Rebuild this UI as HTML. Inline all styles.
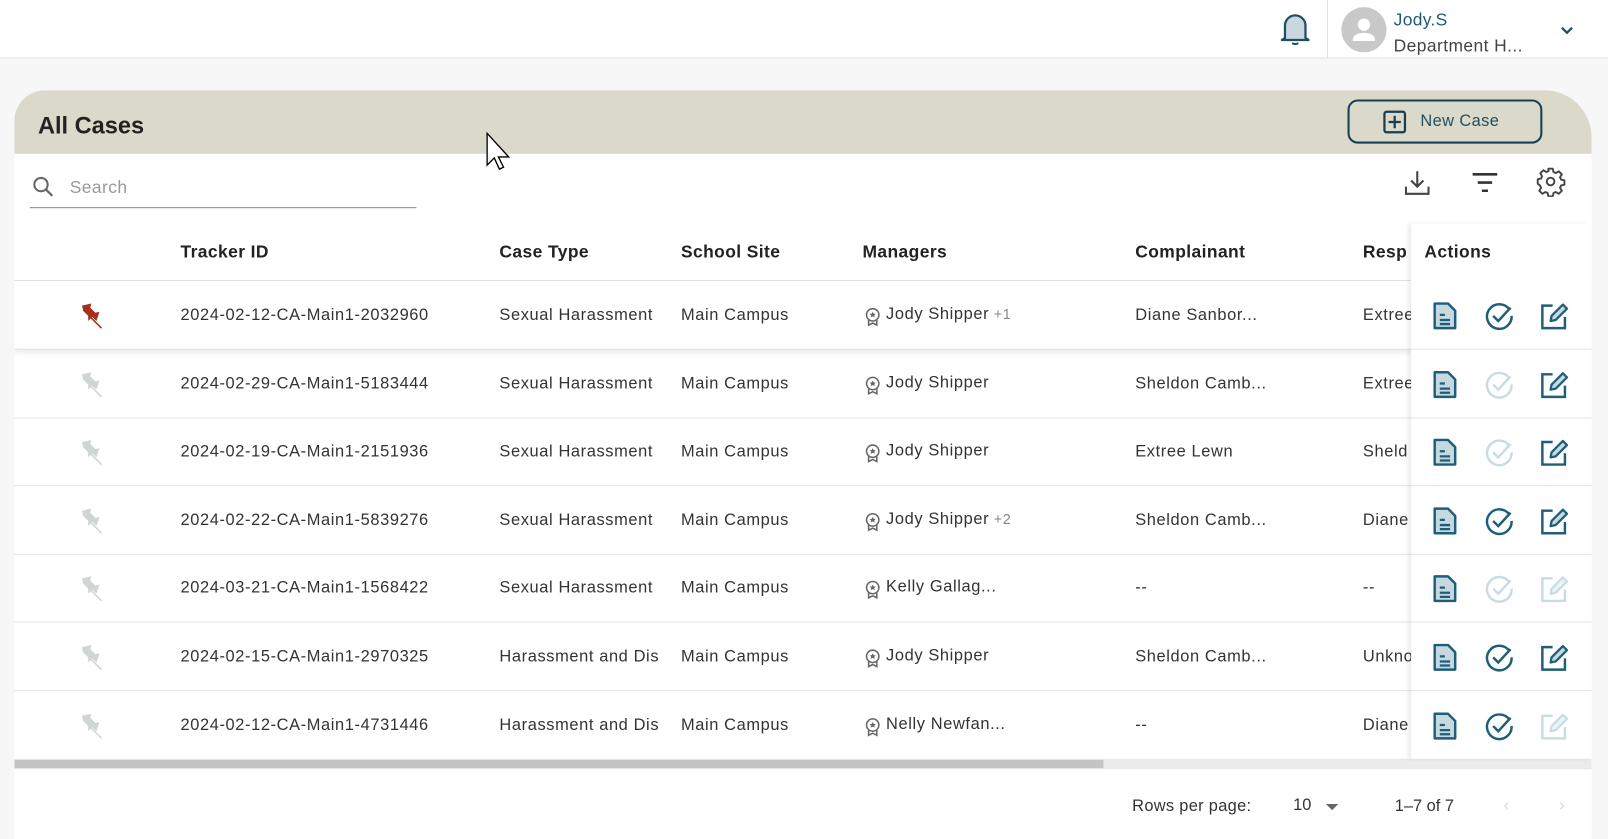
<!DOCTYPE html>
<html><head><meta charset="utf-8"><style>
*{box-sizing:border-box;margin:0;padding:0}
body{width:1608px;height:824px;background:#f7f7f7;font-family:"Liberation Sans",sans-serif;color:#333;position:relative;overflow:hidden}
#wrap{position:absolute;left:0;top:0;width:1568px;height:804px;transform:scale(1.02551);transform-origin:0 0}
.top{position:absolute;left:0;top:0;width:1568px;height:57px;background:#fff;border-bottom:1px solid #e2e2e2}
.abs{position:absolute}
.card{position:absolute;left:14px;top:88px;width:1538px;height:730px;background:#fff;border-radius:30px 46px 0 0;overflow:hidden}
.hdr{position:absolute;left:0;top:0;width:100%;height:62px;background:#dbd9ca}
.t{position:absolute;font-size:16px;letter-spacing:.6px;color:#333;white-space:nowrap}
.h{position:absolute;font-size:17px;font-weight:bold;letter-spacing:.4px;color:#222;white-space:nowrap}
.row{position:absolute;left:0;width:1538px;border-bottom:1px solid #e4e4e4}
.act{position:absolute;left:1362px;top:130px;width:176px;height:522px;background:#fff;box-shadow:-3px 0 4px rgba(0,0,0,.08)}
.g{color:#888}
</style></head><body>
<div id="wrap">
<div class="top">
 <svg class="abs" style="left:1246px;top:10px" width="34" height="36" viewBox="0 0 34 36"><path d="M7 27V15a10 10 0 0 1 20 0v12l3 2H4z" fill="#c9d7de" stroke="#1f4f63" stroke-width="2.2" stroke-linejoin="round"/><path d="M14 32q3 2 6 0" stroke="#1f4f63" stroke-width="2" fill="none"/></svg>
 <div class="abs" style="left:1294px;top:0;width:1px;height:57px;background:#e2e2e2"></div>
 <svg class="abs" style="left:1308px;top:7px" width="44" height="44" viewBox="0 0 44 44"><circle cx="22" cy="22" r="22" fill="#c8c8c8"/><circle cx="22" cy="17" r="6" fill="#fff"/><path d="M11 33q0-8 11-8t11 8z" fill="#fff"/></svg>
 <div class="abs" style="left:1359px;top:10px;font-size:17px;color:#1f5a72;letter-spacing:.3px">Jody.S</div>
 <div class="abs" style="left:1359px;top:35px;font-size:17px;color:#444;letter-spacing:.4px">Department H...</div>
 <svg class="abs" style="left:1520px;top:24px" width="16" height="12" viewBox="0 0 16 12"><path d="M3 3l5 5 5-5" stroke="#1f4f63" stroke-width="2.2" fill="none"/></svg>
</div>
<div class="card">
 <div class="hdr"></div>
 <div class="abs" style="left:23px;top:21px;font-size:23px;font-weight:bold;color:#222">All Cases</div>
 <div class="abs" style="left:1300px;top:9px;width:190px;height:43px;border:2.5px solid #173f52;border-radius:10px"></div>
 <svg class="abs" style="left:1334px;top:19px" width="24" height="24" viewBox="0 0 24 24"><rect x="2" y="2" width="20" height="20" rx="2" fill="none" stroke="#173f52" stroke-width="2.2"/><path d="M12 6v12M6 12h12" stroke="#173f52" stroke-width="2.2"/></svg>
 <div class="abs" style="left:1371px;top:22px;font-size:16px;color:#1f4f63;letter-spacing:.4px">New Case</div>
 <svg class="abs" style="left:16px;top:82px" width="24" height="24" viewBox="0 0 24 24"><circle cx="10" cy="10" r="6.5" fill="none" stroke="#666" stroke-width="2"/><path d="M15 15l6 6" stroke="#666" stroke-width="2.2"/></svg>
 <div class="abs" style="left:54px;top:85px;font-size:17px;color:#999;letter-spacing:.4px">Search</div>
 <div class="abs" style="left:15px;top:114px;width:377px;height:1px;background:#888"></div>
 <svg class="abs" style="left:1354px;top:76px" width="28" height="28" viewBox="0 0 28 28"><path d="M14 3v15M8 12l6 6 6-6M3 18v7h22v-7" stroke="#444" stroke-width="2" fill="none"/></svg>
 <svg class="abs" style="left:1420px;top:78px" width="28" height="24" viewBox="0 0 28 24"><path d="M2 4h24M7 12h14M11 20h6" stroke="#333" stroke-width="2.5"/></svg>
 <svg class="abs" style="left:1483px;top:74px" width="30" height="30" viewBox="0 0 24 24"><path d="M10.3 2h3.4l.6 2.6 1.8.8 2.3-1.4 2.4 2.4-1.4 2.3.8 1.8 2.6.6v3.4l-2.6.6-.8 1.8 1.4 2.3-2.4 2.4-2.3-1.4-1.8.8-.6 2.6h-3.4l-.6-2.6-1.8-.8-2.3 1.4-2.4-2.4 1.4-2.3-.8-1.8L2 13.7v-3.4l2.6-.6.8-1.8L4 5.6 6.4 3.2l2.3 1.4 1.8-.8z" fill="none" stroke="#444" stroke-width="1.5" stroke-linejoin="round"/><circle cx="12" cy="12" r="3" fill="none" stroke="#444" stroke-width="1.5"/></svg>

 <div class="row" style="top:130px;height:56px"></div>
 <div class="h" style="left:162px;top:148px">Tracker ID</div>
 <div class="h" style="left:473px;top:148px">Case Type</div>
 <div class="h" style="left:650px;top:148px">School Site</div>
 <div class="h" style="left:827px;top:148px">Managers</div>
 <div class="h" style="left:1093px;top:148px">Complainant</div>
 <div class="h" style="left:1315px;top:148px">Resp</div>
 <div id="rows"></div>
 <div class="abs" style="left:0;top:653px;width:1538px;height:8px;background:#ececec"></div>
 <div class="abs" style="left:0;top:653px;width:1062px;height:8px;background:#c4c4c4"></div>
 <div class="act" id="act"></div>
 <div class="h" style="left:1375px;top:148px">Actions</div>
 <div class="abs" style="left:0;top:661px;width:1538px;height:1px;background:#e4e4e4"></div>
 <div class="abs" style="left:1090px;top:690px;font-size:16px;color:#333;letter-spacing:.3px">Rows per page:</div>
 <div class="abs" style="left:1247px;top:689px;font-size:16px;color:#333">10</div>
 <svg class="abs" style="left:1278px;top:695px" width="14" height="8"><path d="M1 1h12L7 7z" fill="#666"/></svg>
 <div class="abs" style="left:1346px;top:690px;font-size:16px;color:#333">1–7 of 7</div>
 <div class="abs" style="left:1452px;top:687px;font-size:18px;color:#ddd">&lsaquo;</div>
 <div class="abs" style="left:1506px;top:687px;font-size:18px;color:#ddd">&rsaquo;</div>
</div>
<svg class="abs" style="left:474px;top:129px" width="26" height="40" viewBox="0 0 26 40"><path d="M1 1v31l7-7 5 11 4-2-5-10h10z" fill="#fff" stroke="#000" stroke-width="1.3"/></svg>
</div>
<script>
var d=[
["2024-02-12-CA-Main1-2032960","Sexual Harassment","Jody Shipper"," +1","Diane Sanbor...","Extree",1,1,1],
["2024-02-29-CA-Main1-5183444","Sexual Harassment","Jody Shipper","","Sheldon Camb...","Extree",0,0,1],
["2024-02-19-CA-Main1-2151936","Sexual Harassment","Jody Shipper","","Extree Lewn","Sheld",0,0,1],
["2024-02-22-CA-Main1-5839276","Sexual Harassment","Jody Shipper"," +2","Sheldon Camb...","Diane",0,1,1],
["2024-03-21-CA-Main1-1568422","Sexual Harassment","Kelly Gallag...","","--","--",0,0,0],
["2024-02-15-CA-Main1-2970325","Harassment and Dis","Jody Shipper","","Sheldon Camb...","Unkno",0,1,1],
["2024-02-12-CA-Main1-4731446","Harassment and Dis","Nelly Newfan...","","--","Diane",0,1,0]];
var h='',a='';
d.forEach(function(r,i){
 var y=186+i*66.6, ty=y+25;
 h+='<div class="row" style="top:'+y+'px;height:67px;'+(i==0?'box-shadow:0 3px 5px rgba(0,0,0,.08);':'')+'"></div>';
 var pc=r[6]?'#a5301f':'#cfd4d6';
 h+='<svg class="abs" style="left:60px;top:'+(y+19)+'px" width="30" height="30" viewBox="0 0 30 30"><path d="M6 5l9-2 -1 4 5 5 4-1-3 9-4-4-4 4 0-5-5-5z" fill="'+pc+'"/><path d="M15 17l10 10" stroke="'+pc+'" stroke-width="1.5"/></svg>';
 h+='<div class="t" style="left:162px;top:'+ty+'px">'+r[0]+'</div>';
 h+='<div class="t" style="left:473px;top:'+ty+'px;width:164px;overflow:hidden">'+r[1]+'</div>';
 h+='<div class="t" style="left:650px;top:'+ty+'px">Main Campus</div>';
 h+='<svg class="abs" style="left:829px;top:'+(ty)+'px" width="16" height="20" viewBox="0 0 16 20"><circle cx="8" cy="8" r="6" fill="none" stroke="#666" stroke-width="1.5"/><path d="M8 5l1 2h2l-1.5 1.5.5 2-2-1-2 1 .5-2L5 7h2z" fill="#666"/><path d="M4 13v5l4-2 4 2v-5" fill="none" stroke="#666" stroke-width="1.5"/></svg>';
 h+='<div class="t" style="left:850px;top:'+(ty-1)+'px">'+r[2]+'<span class="g" style="font-size:14px">'+r[3]+'</span></div>';
 h+='<div class="t" style="left:1093px;top:'+ty+'px">'+r[4]+'</div>';
 h+='<div class="t" style="left:1315px;top:'+ty+'px">'+r[5]+'</div>';
 var ay=y-130+19, cc=r[7]?'#1e5e79':'#c9dbe3', ec=r[8]?'#1e5e79':'#c9dbe3';
 a+='<svg class="abs" style="left:20px;top:'+ay+'px" width="26" height="30" viewBox="0 0 26 30"><path d="M3 3h13l7 7v17H3z" fill="#c6d8e0" stroke="#1e5e79" stroke-width="2.4" stroke-linejoin="round"/><path d="M8 14h5M8 19h10M8 23h10" stroke="#1e5e79" stroke-width="2.2"/></svg>';
 a+='<svg class="abs" style="left:71px;top:'+ay+'px" width="30" height="30" viewBox="0 0 30 30"><path d="M25 9A12 12 0 1 0 27 15" fill="none" stroke="'+cc+'" stroke-width="2.4"/><path d="M9 15l5 5 12-13" fill="none" stroke="'+cc+'" stroke-width="2.4"/></svg>';
 a+='<svg class="abs" style="left:124px;top:'+ay+'px" width="30" height="30" viewBox="0 0 30 30"><path d="M14 5H4v22h22V16" fill="none" stroke="'+ec+'" stroke-width="2.4"/><path d="M12 20l1-5 11-11 4 4-11 11z" fill="'+(r[8]?'#c6d8e0':'#eef3f5')+'" stroke="'+ec+'" stroke-width="2.2" stroke-linejoin="round"/></svg>';
 a+='<div class="abs" style="left:0;top:'+(y-130+66)+'px;width:176px;height:1px;background:#e4e4e4"></div>';
});
document.getElementById('rows').innerHTML=h;
document.getElementById('act').innerHTML=a;
</script>
</body></html>
